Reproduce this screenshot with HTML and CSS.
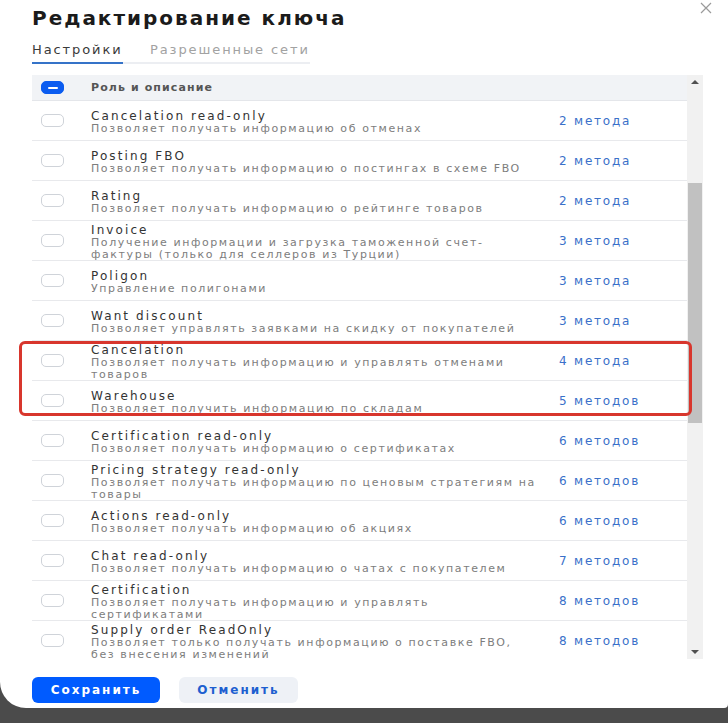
FILE: index.html
```html
<!DOCTYPE html>
<html lang="ru">
<head>
<meta charset="utf-8">
<link rel="stylesheet" href="styles.css">
</head>
<body>
<div class="modal">
  <button class="close" aria-label="Закрыть">
    <svg width="12" height="12" viewBox="0 0 12 12"><path d="M1 1L11 11M11 1L1 11" stroke="#9a9a9a" stroke-width="1.2" fill="none"/></svg>
  </button>
  <h1 class="title">Редактирование ключа</h1>
  <div class="tabs">
    <div class="tab active">Настройки</div>
    <div class="tab">Разрешенные сети</div>
  </div>

  <div class="table-wrap">
    <div class="list">
      <div class="head">
        <div class="cb-col"><span class="cb cb-minus"><span></span></span></div>
        <div class="head-label">Роль и описание</div>
      </div>
      <div class="rows">
        <div class="row"><div class="cb-col"><span class="cb"></span></div><div class="info"><div class="name">Cancelation read-only</div><div class="desc">Позволяет получать информацию об отменах</div></div><div class="methods">2 метода</div></div>
        <div class="row"><div class="cb-col"><span class="cb"></span></div><div class="info"><div class="name">Posting FBO</div><div class="desc">Позволяет получать информацию о постингах в схеме FBO</div></div><div class="methods">2 метода</div></div>
        <div class="row"><div class="cb-col"><span class="cb"></span></div><div class="info"><div class="name">Rating</div><div class="desc">Позволяет получать информацию о рейтинге товаров</div></div><div class="methods">2 метода</div></div>
        <div class="row"><div class="cb-col"><span class="cb"></span></div><div class="info"><div class="name">Invoice</div><div class="desc">Получение информации и загрузка таможенной счет-<br>фактуры (только для селлеров из Турции)</div></div><div class="methods">3 метода</div></div>
        <div class="row"><div class="cb-col"><span class="cb"></span></div><div class="info"><div class="name">Poligon</div><div class="desc">Управление полигонами</div></div><div class="methods">3 метода</div></div>
        <div class="row"><div class="cb-col"><span class="cb"></span></div><div class="info"><div class="name">Want discount</div><div class="desc">Позволяет управлять заявками на скидку от покупателей</div></div><div class="methods">3 метода</div></div>
        <div class="row"><div class="cb-col"><span class="cb"></span></div><div class="info"><div class="name">Cancelation</div><div class="desc">Позволяет получать информацию и управлять отменами<br>товаров</div></div><div class="methods">4 метода</div></div>
        <div class="row"><div class="cb-col"><span class="cb"></span></div><div class="info"><div class="name">Warehouse</div><div class="desc">Позволяет получить информацию по складам</div></div><div class="methods">5 методов</div></div>
        <div class="row"><div class="cb-col"><span class="cb"></span></div><div class="info"><div class="name">Certification read-only</div><div class="desc">Позволяет получать информацию о сертификатах</div></div><div class="methods">6 методов</div></div>
        <div class="row"><div class="cb-col"><span class="cb"></span></div><div class="info"><div class="name">Pricing strategy read-only</div><div class="desc">Позволяет получать информацию по ценовым стратегиям на<br>товары</div></div><div class="methods">6 методов</div></div>
        <div class="row"><div class="cb-col"><span class="cb"></span></div><div class="info"><div class="name">Actions read-only</div><div class="desc">Позволяет получать информацию об акциях</div></div><div class="methods">6 методов</div></div>
        <div class="row"><div class="cb-col"><span class="cb"></span></div><div class="info"><div class="name">Chat read-only</div><div class="desc">Позволяет получать информацию о чатах с покупателем</div></div><div class="methods">7 методов</div></div>
        <div class="row"><div class="cb-col"><span class="cb"></span></div><div class="info"><div class="name">Certification</div><div class="desc">Позволяет получать информацию и управлять<br>сертификатами</div></div><div class="methods">8 методов</div></div>
        <div class="row"><div class="cb-col"><span class="cb"></span></div><div class="info"><div class="name">Supply order ReadOnly</div><div class="desc">Позволяет только получать информацию о поставке FBO,<br>без внесения изменений</div></div><div class="methods">8 методов</div></div>
      </div>
    </div>
    <div class="scrollbar">
      <div class="arrow up"></div>
      <div class="track"><div class="thumb"></div></div>
      <div class="arrow down"></div>
    </div>
  </div>

  <div class="actions">
    <button class="btn btn-primary">Сохранить</button>
    <button class="btn btn-secondary">Отменить</button>
  </div>

  <div class="highlight"></div>
</div>
</body>
</html>
```

FILE: styles.css
```css
* { box-sizing: border-box; }
html, body { margin: 0; padding: 0; }
body {
  background: #4b4b4b;
  font-family: "DejaVu Sans", "Noto Sans", sans-serif;
  color: #333;
  height: 723px;
  overflow: hidden;
}
.modal {
  position: relative;
  background: #fff;
  height: 708px;
  border-bottom-left-radius: 26px;
  border-bottom-right-radius: 4px;
  padding: 4px 25px 0 32px;
}
.close {
  position: absolute;
  top: 2px;
  right: 16px;
  border: 0;
  background: none;
  padding: 0;
  width: 12px;
  height: 12px;
}
.close svg { display: block; }
.title {
  margin: 0;
  height: 28px;
  line-height: 28px;
  font-size: 20px;
  font-weight: 700;
  letter-spacing: 2px;
  color: #1b1b1b;
}
.tabs {
  display: flex;
  margin-top: 8px;
  width: 278px;
  border-bottom: 2px solid #eceef2;
}
.tab {
  font-size: 13px;
  line-height: 18px;
  padding-top: 1px;
  padding-bottom: 3px;
  margin-bottom: -2px;
  letter-spacing: 1.9px;
  color: #a2a2a2;
  white-space: nowrap;
}
.tab.active {
  color: #3a3a3a;
  width: 91px;
  border-bottom: 2px solid #3573c8;
  margin-right: 27px;
}
.table-wrap {
  margin-top: 11px;
  display: flex;
  height: 584px;
  overflow: hidden;
}
.list {
  flex: 1;
  overflow: hidden;
}
.head {
  display: flex;
  align-items: center;
  height: 26px;
  background: #f1f3f6;
  border-bottom: 1px solid #e4e6ea;
}
.cb-col {
  width: 59px;
  flex: none;
  padding-left: 9px;
  display: flex;
  align-items: center;
}
.cb {
  display: block;
  width: 23px;
  height: 13px;
  border: 1px solid #cfd3d9;
  border-radius: 5px;
  background: #fff;
}
.cb-minus {
  background: #0b5cf0;
  border-color: #0b5cf0;
  display: flex;
  align-items: center;
  justify-content: center;
}
.cb-minus span {
  width: 10px;
  height: 2px;
  background: #fff;
  border-radius: 1px;
}
.head-label {
  font-size: 11px;
  font-weight: 700;
  color: #555;
  letter-spacing: 1.1px;
}
.row {
  display: flex;
  align-items: center;
  height: 40px;
  border-bottom: 1px solid #e8e9ec;
}
.info {
  width: 468px;
  flex: none;
  padding-top: 3px;
}
.name {
  font-size: 12px;
  line-height: 13px;
  color: #333;
  letter-spacing: 2.1px;
}
.desc {
  font-size: 11px;
  line-height: 11.5px;
  color: #7d7d7d;
  letter-spacing: 1.6px;
}
.methods {
  font-size: 12px;
  color: #3a70c9;
  letter-spacing: 1.8px;
}
.scrollbar {
  width: 16px;
  flex: none;
  background: #f1f1f1;
  display: flex;
  flex-direction: column;
  align-items: center;
  padding: 2px 0;
}
.arrow {
  width: 0;
  height: 0;
  border-left: 4px solid transparent;
  border-right: 4px solid transparent;
  margin: 3px 0;
}
.arrow.up { border-bottom: 4px solid #505050; }
.arrow.down { border-top: 4px solid #505050; }
.track {
  flex: 1;
  width: 100%;
  padding: 96px 1px 224px;
}
.thumb {
  height: 100%;
  background: #c1c1c1;
}
.actions {
  display: flex;
  gap: 19px;
  margin-top: 18px;
}
.btn {
  height: 26px;
  border: 0;
  border-radius: 6px;
  font-family: inherit;
  font-size: 12px;
  font-weight: 700;
  letter-spacing: 2px;
}
.btn-primary {
  width: 128px;
  background: #005bff;
  color: #fff;
}
.btn-secondary {
  width: 119px;
  background: #eef1f6;
  color: #1d5fd0;
}
.highlight {
  position: absolute;
  left: 19px;
  top: 341px;
  width: 673px;
  height: 75px;
  border: 3px solid #d8362d;
  border-radius: 6px;
  pointer-events: none;
}
```
